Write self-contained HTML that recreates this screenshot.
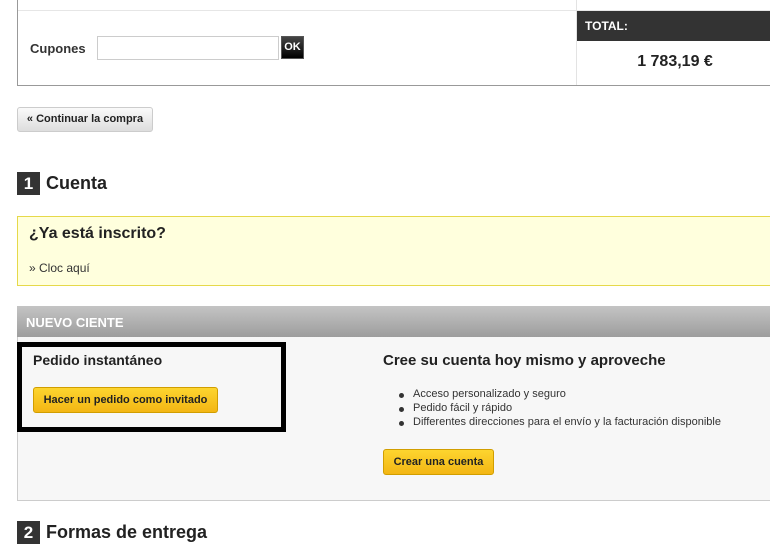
<!DOCTYPE html>
<html><head><meta charset="utf-8"><style>
*{margin:0;padding:0;box-sizing:border-box}
body{width:770px;height:547px;overflow:hidden;background:#fff;font-family:"Liberation Sans",Arial,sans-serif;color:#222;position:relative}
.a{position:absolute}
.btn{position:absolute;border:1px solid #d19e00;border-radius:3px;background:linear-gradient(#fdd52f,#f3b614);font-size:12px;font-weight:bold;color:#222;text-align:center}
.num{position:absolute;width:23px;height:23px;background:#333;color:#fff;font-size:17px;font-weight:bold;text-align:center;line-height:23px}
.h{position:absolute;font-size:18px;font-weight:bold;color:#222}
li{list-style:none;position:relative;padding-left:30px;height:14px}
li:before{content:"";position:absolute;left:16px;top:5px;width:5px;height:5px;border-radius:50%;background:#333}
</style></head><body>
<div class="a" style="left:17px;top:0;width:1px;height:86px;background:#999"></div>
<div class="a" style="left:18px;top:10px;width:752px;height:1px;background:#e6e6e6"></div>
<div class="a" style="left:17px;top:85px;width:753px;height:1px;background:#999"></div>
<div class="a" style="left:576px;top:0;width:1px;height:85px;background:#e3e3e3"></div>
<div class="a" style="left:577px;top:11px;width:193px;height:30px;background:#333;color:#fff;font-size:12px;font-weight:bold;padding:8px 0 0 8px">TOTAL:</div>
<div class="a" style="left:577px;top:53px;width:196px;text-align:center;font-size:16px;font-weight:bold;color:#222">1 783,19 €</div>
<div class="a" style="left:30px;top:41px;font-size:13px;font-weight:bold;color:#333">Cupones</div>
<div class="a" style="left:97px;top:36px;width:182px;height:24px;border:1px solid #ccc;background:#fff"></div>
<div class="a" style="left:281px;top:36px;width:23px;height:23px;background:linear-gradient(#444,#000);border:1px solid #555;color:#fff;font-size:11px;font-weight:bold;text-align:center;line-height:21px">OK</div>
<div class="a" style="left:17px;top:107px;width:136px;height:25px;border:1px solid #ccc;border-radius:3px;background:linear-gradient(#fafafa,#ddd);font-size:11px;font-weight:bold;text-align:center;line-height:23px;color:#222">« Continuar la compra</div>
<div class="num" style="left:17px;top:172px">1</div>
<div class="h" style="left:46px;top:173px">Cuenta</div>
<div class="a" style="left:17px;top:216px;width:760px;height:70px;background:#ffffdd;border:1px solid #e6d94a"></div>
<div class="a" style="left:29px;top:225px;font-size:16px;font-weight:bold">¿Ya está inscrito?</div>
<div class="a" style="left:29px;top:261px;font-size:12px;color:#333">» Cloc aquí</div>
<div class="a" style="left:17px;top:306px;width:760px;height:195px;border:1px solid #ccc;background:#f7f7f7"></div>
<div class="a" style="left:17px;top:306px;width:760px;height:31px;background:linear-gradient(#c4c4c4,#9d9d9d);color:#fff;font-size:13px;font-weight:bold;padding:9px 0 0 9px">NUEVO CIENTE</div>
<div class="a" style="left:17px;top:342px;width:269px;height:90px;border:5px solid #000"></div>
<div class="a" style="left:33px;top:352px;font-size:14px;font-weight:bold">Pedido instantáneo</div>
<div class="btn" style="left:33px;top:387px;width:185px;height:26px;line-height:24px;font-size:11px">Hacer un pedido como invitado</div>
<div class="a" style="left:383px;top:352px;font-size:15px;font-weight:bold">Cree su cuenta hoy mismo y aproveche</div>
<ul class="a" style="left:383px;top:388px;font-size:11px;color:#333">
<li>Acceso personalizado y seguro</li><li>Pedido fácil y rápido</li><li>Differentes direcciones para el envío y la facturación disponible</li></ul>
<div class="btn" style="left:383px;top:449px;width:111px;height:26px;line-height:24px;font-size:11px">Crear una cuenta</div>
<div class="num" style="left:17px;top:521px">2</div>
<div class="h" style="left:46px;top:522px">Formas de entrega</div>
</body></html>
